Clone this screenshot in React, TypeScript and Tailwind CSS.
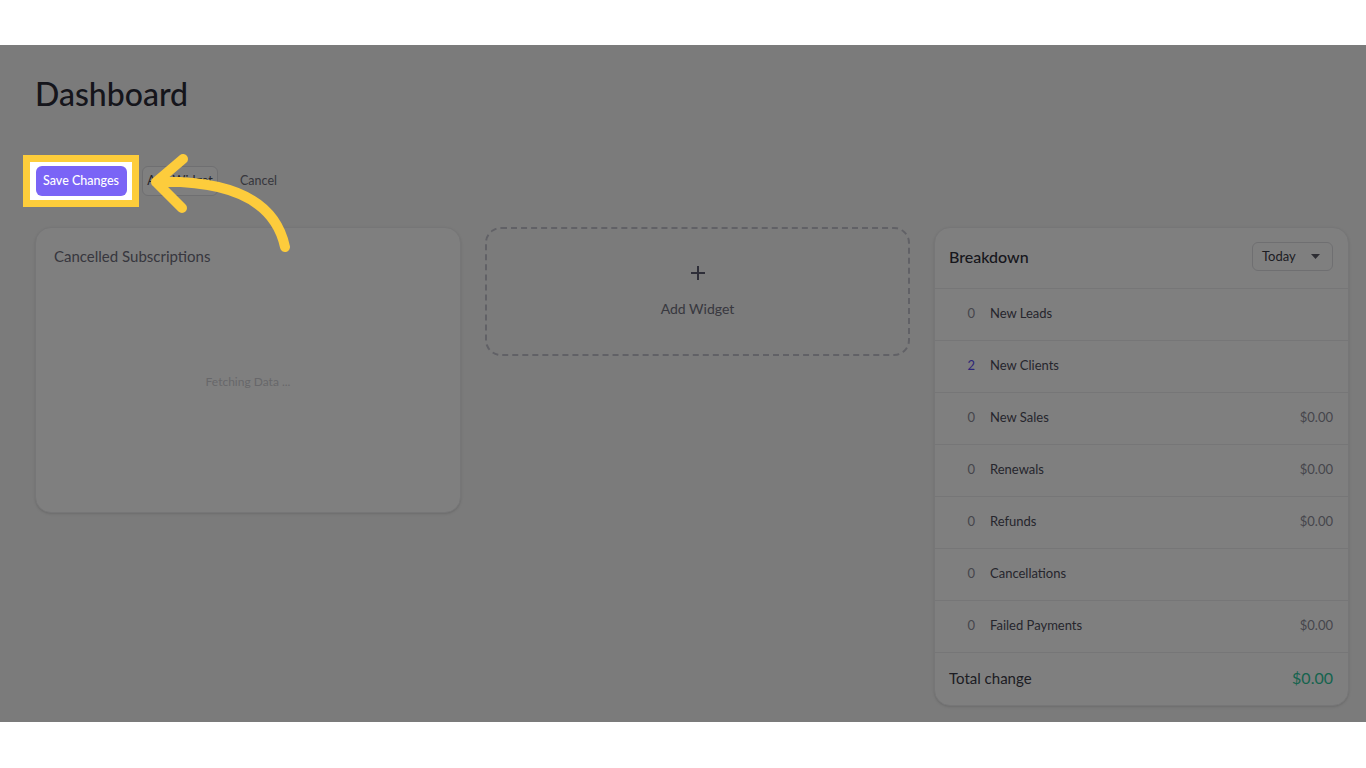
import React from 'react';

// Breakdown rows shown in the right card
const rows = [
  { count: '0', label: 'New Leads', amount: '' },
  { count: '2', label: 'New Clients', amount: '', highlight: true },
  { count: '0', label: 'New Sales', amount: '$0.00' },
  { count: '0', label: 'Renewals', amount: '$0.00' },
  { count: '0', label: 'Refunds', amount: '$0.00' },
  { count: '0', label: 'Cancellations', amount: '' },
  { count: '0', label: 'Failed Payments', amount: '$0.00' },
];

function SaveButton() {
  return (
    <button className="h-[30px] w-[91px] rounded-md bg-[#7a64f6] text-[12.5px] font-medium text-white">
      Save Changes
    </button>
  );
}

export default function App() {
  return (
    <div className="h-screen w-full overflow-hidden bg-white font-['Lato',sans-serif]">
      <div className="relative mt-[45px] h-[677px] w-full bg-[#f6f6f6]">
        {/* Dashboard page */}
        <div className="pl-[35px] pr-[17px] pt-[29px]">
          <h1 className="h-[40px] text-[32px] leading-[40px] font-medium text-[#2b2b36]">Dashboard</h1>

          <div className="mt-[52px] flex items-center">
            <SaveButton />
            <button className="ml-[16px] h-[30px] w-[76px] rounded-md border border-[#dedee2] bg-white text-[12.5px] text-[#4a4a56]">
              Add Widget
            </button>
            <button className="ml-[22px] text-[12.5px] text-[#6e6e7a]">Cancel</button>
          </div>

          <div className="mt-[31px] flex items-start gap-6">
            {/* Cancelled subscriptions */}
            <div className="flex h-[286px] w-[426px] shrink-0 flex-col rounded-2xl border border-[#ececee] bg-white pb-[14px] shadow-sm">
              <div className="px-[18px] pt-[18px] text-[15px] leading-5 text-[#6e6e7c]">Cancelled Subscriptions</div>
              <div className="flex flex-1 items-center justify-center text-[12px] text-[#cfcfd4]">Fetching Data ...</div>
            </div>

            {/* Add widget */}
            <div className="flex h-[129px] w-[425px] shrink-0 flex-col items-center justify-center gap-[18px] rounded-2xl border-2 border-dashed border-[#c2c2cc]">
              <svg width="16" height="16" viewBox="0 0 16 16" fill="none">
                <path d="M8 1v14M1 8h14" stroke="#5c5c70" strokeWidth="2" />
              </svg>
              <div className="text-[14px] leading-5 text-[#70707e]">Add Widget</div>
            </div>

            {/* Breakdown */}
            <div className="w-[415px] shrink-0 rounded-2xl border border-[#ececee] bg-white shadow-sm">
              <div className="flex h-[60px] items-center justify-between pb-[3px] pl-[14px] pr-[15px]">
                <div className="text-[16px] font-medium text-[#2f2f3a]">Breakdown</div>
                <div className="flex h-[29px] w-[81px] items-center justify-between rounded-md border border-[#dedee2] pl-[9px] pr-[12px]">
                  <span className="text-[13px] text-[#3a3a46]">Today</span>
                  <svg width="9" height="5" viewBox="0 0 9 5">
                    <path d="M0 0h9L4.5 5z" fill="#5a5a66" />
                  </svg>
                </div>
              </div>
              {rows.map((r) => (
                <div key={r.label} className="flex h-[52px] items-center border-t border-[#ececee] pb-[2px] pl-[14px] pr-[15px] text-[13px]">
                  <span className={`w-[26px] text-right ${r.highlight ? 'text-[#5b4ef0]' : 'text-[#8c8c98]'}`}>{r.count}</span>
                  <span className="ml-[15px] flex-1 text-[#4c4c5a]">{r.label}</span>
                  <span className="text-[#8c8c98]">{r.amount}</span>
                </div>
              ))}
              <div className="flex h-[53px] items-center justify-between border-t border-[#ececee] pb-[2px] pl-[14px] pr-[15px]">
                <span className="text-[15px] text-[#3a3a46]">Total change</span>
                <span className="text-[16px] text-[#2cc79c]">$0.00</span>
              </div>
            </div>
          </div>
        </div>

        {/* Dim overlay */}
        <div className="absolute inset-0 bg-black/50" />

        {/* Highlighted button */}
        <div className="absolute left-[23px] top-[110px] flex h-[52px] w-[116px] items-center justify-center border-[7px] border-[#fdcd3b] bg-white">
          <SaveButton />
        </div>

        {/* Pointer arrow */}
        <svg className="absolute left-[140px] top-[100px]" width="160" height="115" viewBox="0 0 160 115" fill="none">
          <path
            d="M16 37 C90 35 135 55 145 102 M43 14 L16 37 L42 63"
            stroke="#fdcc3c"
            strokeWidth="10"
            strokeLinecap="round"
            strokeLinejoin="round"
          />
        </svg>
      </div>
    </div>
  );
}
